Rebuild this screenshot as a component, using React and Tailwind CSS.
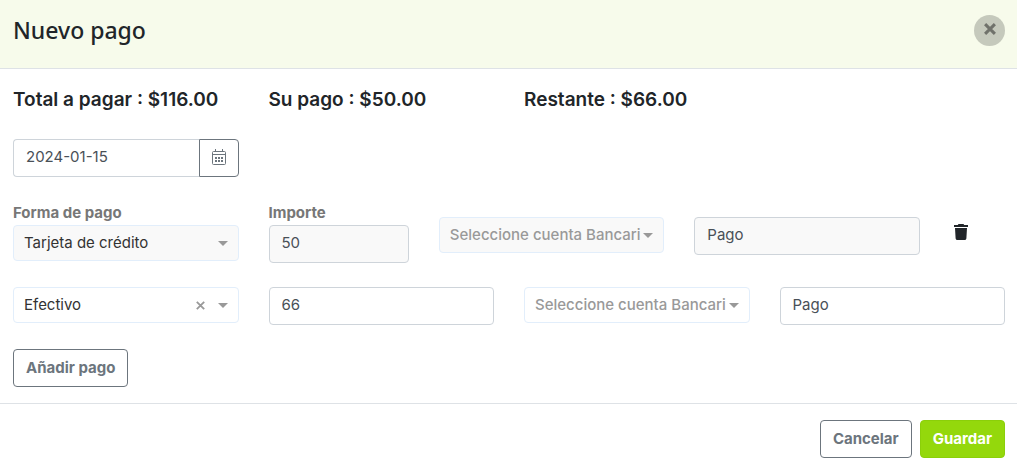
import { useState } from "react";

const totals = [
    { label: "Total a pagar", value: "$116.00" },
    { label: "Su pago", value: "$50.00" },
    { label: "Restante", value: "$66.00" },
];

function CalendarIcon() {
    return (
        <svg width="14" height="16" viewBox="0 0 14 16" fill="none" stroke="currentColor" aria-hidden="true">
            <rect x="0.5" y="2.5" width="13" height="13" rx="1" />
            <path d="M0.5 5.5h13M3.5 0v3M10.5 0v3" />
            <path d="M3 9h2M6 9h2M9 9h2M3 12h2M6 12h2M9 12h2" strokeWidth="2" />
        </svg>
    );
}

function TrashIcon() {
    return (
        <svg width="14" height="16" viewBox="0 0 14 16" fill="currentColor" aria-hidden="true">
            <path d="M4.5 0h5l.7 1H14v2H0V1h3.8zM1 4h12l-.6 10.2c-.1 1-.8 1.8-1.8 1.8H3.4c-1 0-1.7-.8-1.8-1.8z" />
        </svg>
    );
}

function SelectBox({ label, id, options, value, onChange, onClear, disabled, muted }) {
    return (
        <div className="relative">
            <select
                id={id}
                aria-label={label}
                value={value}
                disabled={disabled}
                onChange={(e) => onChange(e.target.value)}
                className={`${disabled ? "bg-[#f9f9f9]" : "bg-white"} ${muted ? "font-medium text-[#999999]" : "text-[#333333]"} block h-9 w-full appearance-none rounded border border-[#e2eefb] pl-2.5 pr-5 pb-px opacity-100 outline-none`}
            >
                {options.map(option => <option key={option} value={option}>{option}</option>)}
            </select>
            {
                onClear &&
                <button onClick={onClear} aria-label="Quitar" className="absolute right-8 top-0 flex h-full w-3 items-center justify-center text-[#999999]">
                    <svg width="9" height="9" viewBox="0 0 9 9" stroke="currentColor" strokeWidth="1.8" aria-hidden="true">
                        <path d="M.8.8l7.4 7.4M8.2.8L.8 8.2" />
                    </svg>
                </button>
            }
            <svg className="pointer-events-none absolute right-[11px] top-4 text-[#999999]" width="10" height="5" viewBox="0 0 10 5" fill="currentColor" aria-hidden="true">
                <path d="M0 0h10L5 5z" />
            </svg>
        </div>
    );
}

function TextBox({ label, id, value, onChange, disabled }) {
    return (
        <input
            id={id}
            type="text"
            aria-label={label}
            value={value}
            disabled={disabled}
            onChange={(e) => onChange(e.target.value)}
            className={`${disabled ? "bg-[#f9f9f9]" : "bg-white"} block h-[38px] w-full rounded border border-[#ced4da] px-3 pb-1 text-[#495057] outline-none`}
        />
    );
}

export default function App() {
    const [date, setDate] = useState("2024-01-15");
    const [payment, setPayment] = useState({ forma: "Efectivo", importe: "66", cuenta: "Seleccione cuenta Bancari", nota: "Pago" });

    const update = (key) => (value) => setPayment({ ...payment, [key]: value });

    return (
        <div className="bg-white font-['Inter',sans-serif] text-[15px] leading-6 text-[#212529]">
            <header className="flex items-center justify-between border-b border-[#dee2e6] bg-[#f7fbeb] pb-[22px] pl-[13px] pr-3 pt-[15px]">
                <h1 className="font-['Noto_Sans',sans-serif] text-[23px] font-medium leading-[31px]">Nuevo pago</h1>
                <button aria-label="Cerrar" className="flex size-[31px] items-center justify-center rounded-full bg-[#c5c9bc] pb-[3px] text-[#70726b]">
                    <svg width="12" height="12" viewBox="0 0 12 12" stroke="currentColor" strokeWidth="3" aria-hidden="true">
                        <path d="M1.1 1.1l9.8 9.8M10.9 1.1L1.1 10.9" />
                    </svg>
                </button>
            </header>

            <main className="flex flex-col gap-6 pb-4 pl-[13px] pr-3 pt-[19px]">
                <div className="grid grid-cols-4 gap-x-[30px] pb-[3px]">
                    {totals.map(total => (
                        <h2 key={total.label} className="whitespace-nowrap text-[19px] font-semibold leading-6">{total.label} : {total.value}</h2>
                    ))}
                </div>

                <div className="grid grid-cols-4 gap-x-[30px]">
                    <div className="flex h-[38px]">
                        <input
                            type="text"
                            aria-label="Fecha"
                            value={date}
                            onChange={(e) => setDate(e.target.value)}
                            className="min-w-0 flex-1 rounded-l border border-r-0 border-[#ced4da] px-3 pb-0.5 text-[#495057] outline-none"
                        />
                        <button aria-label="Abrir calendario" className="flex w-10 items-center justify-center rounded-r border border-[#6c757d] pb-0.5 text-[#6c757d]">
                            <CalendarIcon />
                        </button>
                    </div>
                </div>

                <div className="grid grid-cols-12 gap-x-[30px]">
                    <div className="col-span-3">
                        <label htmlFor="forma" className="block font-bold text-[#777777]">Forma de pago</label>
                        <SelectBox id="forma" options={["Tarjeta de crédito"]} value="Tarjeta de crédito" disabled />
                    </div>
                    <div className="col-span-2">
                        <label htmlFor="importe" className="block font-bold text-[#777777]">Importe</label>
                        <TextBox id="importe" value="50" disabled />
                    </div>
                    <div className="col-span-3 pt-4">
                        <SelectBox label="Cuenta bancaria" options={["Seleccione cuenta Bancari"]} value="Seleccione cuenta Bancari" disabled muted />
                    </div>
                    <div className="col-span-3 pt-4">
                        <TextBox label="Nota" value="Pago" disabled />
                    </div>
                    <div className="pl-1 pt-[23px]">
                        <button aria-label="Eliminar pago" className="block"><TrashIcon /></button>
                    </div>
                </div>

                <div className="grid grid-cols-12 gap-x-[30px]">
                    <div className="col-span-3">
                        <SelectBox label="Forma de pago" options={["Efectivo", "Tarjeta de crédito"]} value={payment.forma} onChange={update("forma")} onClear={() => update("forma")("Efectivo")} />
                    </div>
                    <div className="col-span-3">
                        <TextBox label="Importe" value={payment.importe} onChange={update("importe")} />
                    </div>
                    <div className="col-span-3">
                        <SelectBox label="Cuenta bancaria" options={["Seleccione cuenta Bancari"]} value={payment.cuenta} onChange={update("cuenta")} muted />
                    </div>
                    <div className="col-span-3">
                        <TextBox label="Nota" value={payment.nota} onChange={update("nota")} />
                    </div>
                </div>

                <button className="h-[38px] self-start whitespace-nowrap rounded border border-[#6c757d] px-3 font-bold text-[#6c757d]">Añadir pago</button>
            </main>

            <footer className="flex justify-end gap-2 border-t border-[#dee2e6] py-4 pr-3 font-bold">
                <button className="h-[38px] rounded border border-[#6c757d] px-3 text-[#6c757d]">Cancelar</button>
                <button className="h-[38px] rounded border border-[#8bcf0a] bg-[#94d80c] px-3 text-white">Guardar</button>
            </footer>
        </div>
    );
}
